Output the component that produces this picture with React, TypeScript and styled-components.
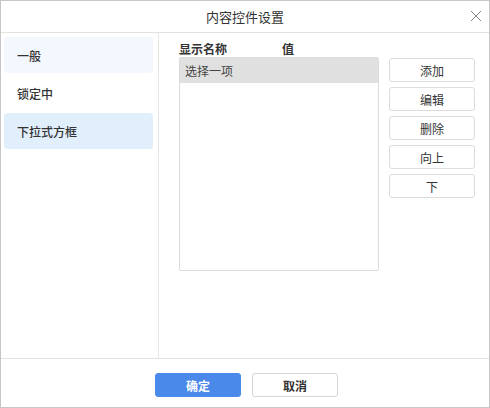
import styled, { createGlobalStyle } from "styled-components";

const Global = createGlobalStyle`
  html, body { margin: 0; padding: 0; background: #fff; }
  body { font-family: "Noto Sans CJK SC", "Noto Sans", sans-serif; color: #333; }
  * { box-sizing: border-box; }
`;

const Dialog = styled.div`
  width: 490px;
  height: 408px;
  border: 1px solid #c6c6c6;
  display: flex;
  flex-direction: column;
  background: #fff;
`;

const Header = styled.div`
  height: 32px;
  border-bottom: 1px solid #e2e2e2;
  display: flex;
  align-items: center;
  justify-content: center;
  position: relative;
`;

const Title = styled.span`
  font-size: 13px;
  color: #333;
`;

const Close = styled.button`
  position: absolute;
  right: 7px;
  top: 9px;
  width: 12px;
  height: 12px;
  padding: 0;
  border: none;
  background: none;
  display: flex;
`;

const Body = styled.div`
  flex: 1;
  display: flex;
  min-height: 0;
`;

const Sidebar = styled.div`
  width: 158px;
  border-right: 1px solid #e6e6e6;
  padding: 4px 5px 0 3px;
  display: flex;
  flex-direction: column;
  gap: 2px;
`;

const NavItem = styled.div<{ $tone?: "hover" | "active" }>`
  height: 36px;
  border-radius: 4px;
  padding-left: 13px;
  display: flex;
  align-items: center;
  font-size: 12px;
  font-weight: 500;
  color: #333;
  background: ${(p) =>
    p.$tone === "active" ? "#e1eefc" : p.$tone === "hover" ? "#f3f8ff" : "transparent"};
`;

const Content = styled.div`
  flex: 1;
  padding: 7px 0 0 20px;
  display: flex;
  flex-direction: column;
`;

const Labels = styled.div`
  display: flex;
  height: 17px;
  align-items: center;
  font-size: 12px;
  font-weight: 700;
  color: #333;
`;

const Label = styled.span<{ $w?: number }>`
  width: ${(p) => (p.$w ? `${p.$w}px` : "auto")};
`;

const Row = styled.div`
  display: flex;
  gap: 10px;
`;

const ListBox = styled.div`
  width: 200px;
  height: 214px;
  border: 1px solid #dcdcdc;
  border-radius: 2px;
`;

const ListItem = styled.div<{ $selected?: boolean }>`
  height: 25px;
  padding-left: 5px;
  display: flex;
  align-items: center;
  font-size: 12px;
  color: #444;
  background: ${(p) => (p.$selected ? "#e0e0e0" : "transparent")};
`;

const Actions = styled.div`
  display: flex;
  flex-direction: column;
  gap: 5px;
  padding-top: 1px;
`;

const SideButton = styled.button`
  width: 86px;
  height: 24px;
  border: 1px solid #dcdcdc;
  border-radius: 3px;
  background: #fff;
  font-family: inherit;
  font-size: 12px;
  color: #333;
  padding: 0;
`;

const Footer = styled.div`
  height: 49px;
  border-top: 1px solid #e2e2e2;
  display: flex;
  justify-content: center;
  gap: 11px;
  padding-top: 14px;
  padding-left: 3px;
`;

const FooterButton = styled.button<{ $primary?: boolean }>`
  width: 86px;
  height: 24px;
  border-radius: 3px;
  font-family: inherit;
  font-size: 12px;
  font-weight: 700;
  padding: 0;
  border: 1px solid ${(p) => (p.$primary ? "#4a88e9" : "#d6d6d6")};
  background: ${(p) => (p.$primary ? "#4a88e9" : "#fff")};
  color: ${(p) => (p.$primary ? "#fff" : "#333")};
`;

export default function App() {
  return (
    <>
      <Global />
      <Dialog>
        <Header>
          <Title>内容控件设置</Title>
          <Close aria-label="关闭">
            <svg width="12" height="12" viewBox="0 0 12 12">
              <path d="M1 1 L11 11 M11 1 L1 11" stroke="#888" strokeWidth="1" fill="none" />
            </svg>
          </Close>
        </Header>
        <Body>
          <Sidebar>
            <NavItem $tone="hover">一般</NavItem>
            <NavItem>锁定中</NavItem>
            <NavItem $tone="active">下拉式方框</NavItem>
          </Sidebar>
          <Content>
            <Labels>
              <Label $w={103}>显示名称</Label>
              <Label>值</Label>
            </Labels>
            <Row>
              <ListBox>
                <ListItem $selected>选择一项</ListItem>
              </ListBox>
              <Actions>
                <SideButton>添加</SideButton>
                <SideButton>编辑</SideButton>
                <SideButton>删除</SideButton>
                <SideButton>向上</SideButton>
                <SideButton>下</SideButton>
              </Actions>
            </Row>
          </Content>
        </Body>
        <Footer>
          <FooterButton $primary>确定</FooterButton>
          <FooterButton>取消</FooterButton>
        </Footer>
      </Dialog>
    </>
  );
}
